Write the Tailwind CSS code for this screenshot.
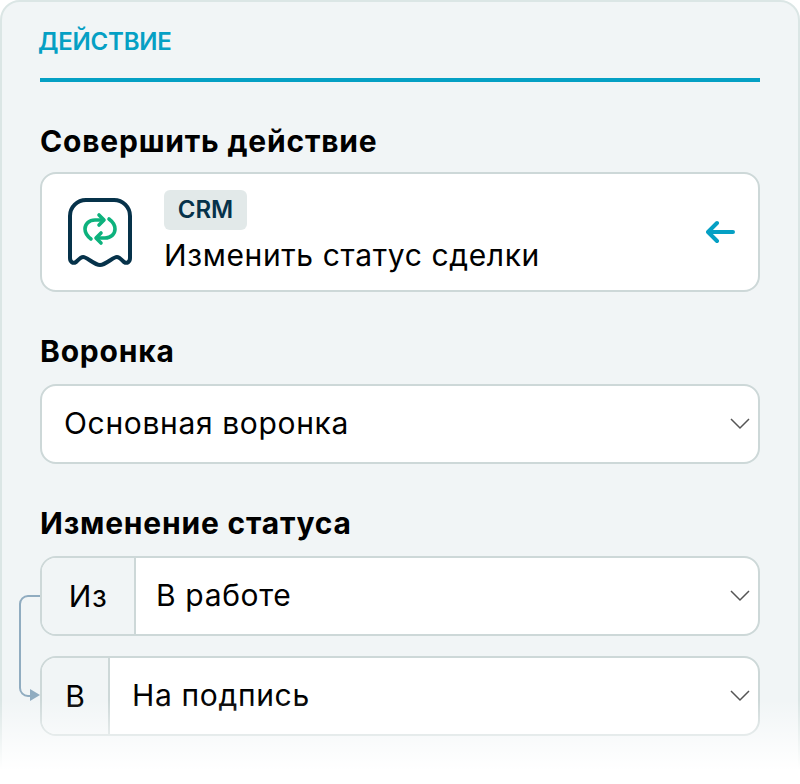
<!DOCTYPE html>
<html lang="ru">
<head>
    <meta charset="UTF-8">
    <title>Действие</title>
    <script src="https://cdn.jsdelivr.net/npm/@tailwindcss/browser@4"></script>
</head>
<body class="bg-white font-['Inter',sans-serif] text-black">
    <div class="relative w-[800px] h-[784px] overflow-hidden">
        <div class="h-[800px] border-2 border-[#dbe6e5] rounded-[20px] bg-[#f1f5f6] px-[38px] pt-[25px]">
            <div class="h-[30px] leading-[30px] text-[24px] font-semibold text-[#05a0c4] -ml-[2px] tracking-[-0.2px]">ДЕЙСТВИЕ</div>
            <div class="h-1 mt-[21px] bg-[#05a0c4]"></div>

            <div class="mt-[39px] h-[40px] leading-[40px] text-[30px] font-bold tracking-[0.8px]">Совершить действие</div>
            <div class="mt-[11px] h-[120px] flex items-center border-2 border-[#cdd8d8] rounded-[16px] bg-white">
                <svg class="ml-[24px] w-[68px] h-[72px]" viewBox="0 0 68 72" fill="none">
                    <path d="M4 62V20a16 16 0 0 1 16-16h28a16 16 0 0 1 16 16v42C64 66 61 68 58 66C54 62 52 60 49 61.500C45 63 39 69 34 69C29 69 23 63 19 61.500C16 60 14 62 10 66C7 68 4 66 4 62Z" stroke="#06324a" stroke-width="4" stroke-linejoin="round"/>
                    <g stroke="#0db27d" stroke-width="3.600" stroke-linecap="round" stroke-linejoin="round">
                        <path d="M25 43C21 40 19 36 19 33C19 28 23 24 29 24H37"/>
                        <path d="M33 19l5 5-5 5"/>
                        <path d="M43 23C47 26 49 30 49 33C49 38 45 42 39 42H31"/>
                        <path d="M35 37l-5 5 5 5"/>
                    </g>
                </svg>
                <div class="ml-[30px] flex-1 h-full pt-[16px]">
                    <span class="block w-[83px] h-10 leading-10 text-center rounded-[6px] bg-[#e2e9e9] text-[#06324a] text-[24px] font-semibold">CRM</span>
                    <div class="mt-[3px] h-[44px] leading-[44px] text-[30px] tracking-[0.63px]">Изменить статус сделки</div>
                </div>
                <svg class="mr-[22px] w-[30px] h-[24px]" viewBox="0 0 30 24" fill="none" stroke="#05a0c4" stroke-width="4" stroke-linecap="round" stroke-linejoin="round">
                    <path d="M27 12H3M11 3l-9 9 9 9"/>
                </svg>
            </div>

            <div class="mt-[39px] h-[40px] leading-[40px] text-[30px] font-bold tracking-[0.8px]">Воронка</div>
            <div class="mt-[13px] h-[80px] flex items-center justify-between border-2 border-[#cdd8d8] rounded-[16px] bg-white pl-[22px] pr-[8px]">
                <span class="-mt-[2px] text-[30px] tracking-[0.65px]">Основная воронка</span>
                <svg class="w-5 h-3" viewBox="0 0 20 12" fill="none" stroke="#555" stroke-width="1.500"><path d="M1 1l9 9 9-9"/></svg>
            </div>

            <div class="mt-[39px] h-[40px] leading-[40px] text-[30px] font-bold tracking-[0.8px]">Изменение статуса</div>
            <div class="relative mt-[13px] h-[80px] flex items-stretch border-2 border-[#cdd8d8] rounded-[16px] bg-white overflow-hidden">
                <div class="w-[94px] flex items-center justify-center border-r-2 border-[#cdd8d8] bg-[#f1f5f6] text-[30px] tracking-[0.65px]">Из</div>
                <div class="flex-1 flex items-center justify-between pl-[20px] pr-[8px]">
                    <span class="-mt-[2px] text-[30px] tracking-[0.65px]">В работе</span>
                    <svg class="w-5 h-3" viewBox="0 0 20 12" fill="none" stroke="#555" stroke-width="1.500"><path d="M1 1l9 9 9-9"/></svg>
                </div>
            </div>
            <div class="mt-[20px] h-[80px] flex items-stretch border-2 border-[#cdd8d8] rounded-[16px] bg-white overflow-hidden">
                <div class="w-[68px] flex items-center justify-center border-r-2 border-[#cdd8d8] bg-[#f1f5f6] text-[30px]">В</div>
                <div class="flex-1 flex items-center justify-between pl-[22px] pr-[8px]">
                    <span class="-mt-[2px] text-[30px] tracking-[0.65px]">На подпись</span>
                    <svg class="w-5 h-3" viewBox="0 0 20 12" fill="none" stroke="#555" stroke-width="1.500"><path d="M1 1l9 9 9-9"/></svg>
                </div>
            </div>
        </div>

        <!-- connector between the two status rows -->
        <svg class="absolute left-[16px] top-[590px] w-[26px] h-[112px]" viewBox="0 0 26 112" fill="none">
            <path d="M24 6h-12a8 8 0 0 0-8 8v84a8 8 0 0 0 8 8h6" stroke="#90acc0" stroke-width="2"/>
            <path d="M14 100l10 6-10 6z" transform="translate(0 -1)" fill="#90acc0"/>
        </svg>

        <!-- fade at the bottom edge -->
        <div class="absolute left-0 right-0 top-[700px] h-[70px] bg-gradient-to-b from-white/0 to-white"></div>
        <div class="absolute left-0 right-0 top-[770px] h-[14px] bg-white"></div>
    </div>
</body>
</html>
